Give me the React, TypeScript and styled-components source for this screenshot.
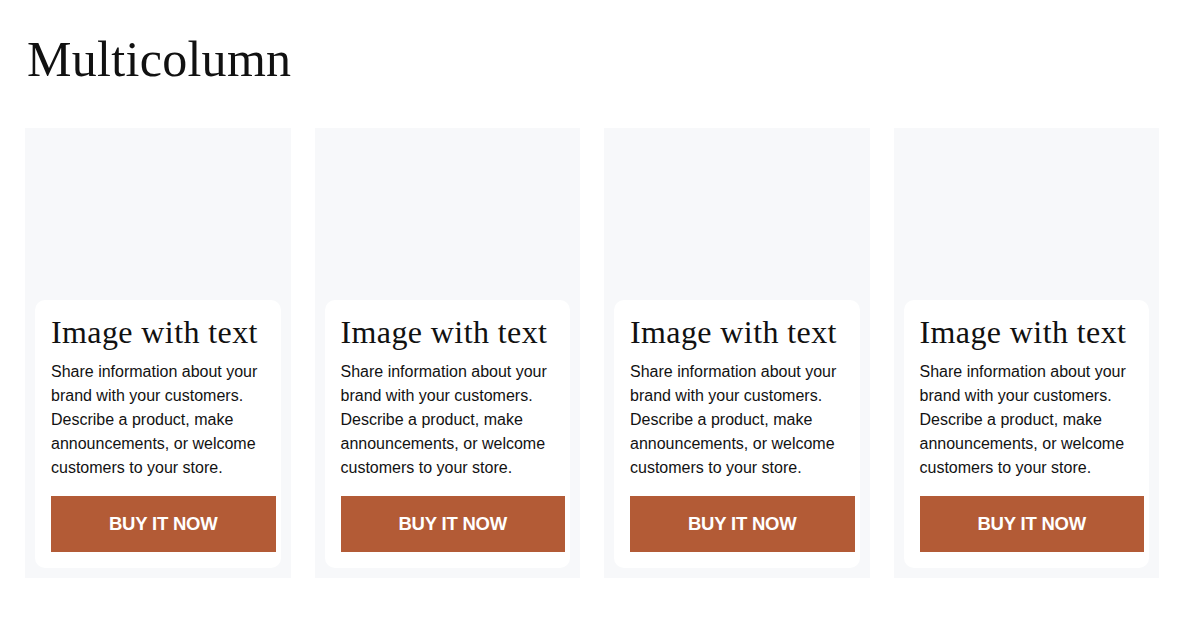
import styled, { createGlobalStyle } from 'styled-components'

const GlobalStyle = createGlobalStyle`
  body {
    margin: 0;
    background: #ffffff;
    font-family: "Liberation Sans", Arial, sans-serif;
  }
`

const Section = styled.section`
  padding: 27px 27px 0 25px;
`

const Title = styled.h2`
  margin: 0 0 37px 2px;
  font-family: "Liberation Serif", "Times New Roman", serif;
  font-weight: 400;
  font-size: 50px;
  letter-spacing: 0.3px;
  line-height: 64px;
  color: #111111;
`

const Grid = styled.div`
  display: grid;
  grid-template-columns: repeat(4, 1fr);
  column-gap: 24px;
`

const Column = styled.div`
  background: #f7f8fa;
  padding: 10px;
  display: flex;
  flex-direction: column;
`

const ImageSpace = styled.div`
  height: 162px;
`

const Card = styled.div`
  background: #ffffff;
  border-radius: 10px;
  padding: 14px 5px 16px 16px;
`

const CardTitle = styled.h3`
  margin: 0 0 10px;
  font-family: "Liberation Serif", "Times New Roman", serif;
  font-weight: 400;
  font-size: 32px;
  letter-spacing: 0.4px;
  line-height: 36px;
  color: #111111;
`

const Text = styled.p`
  margin: 0 0 16px;
  font-size: 16px;
  line-height: 24px;
  color: #121212;
  max-width: 214px;
`

const Button = styled.a`
  display: flex;
  align-items: center;
  justify-content: center;
  height: 56px;
  background: #b35b36;
  color: #ffffff;
  font-weight: 700;
  font-size: 18.5px;
  letter-spacing: -0.2px;
  text-decoration: none;
  text-transform: uppercase;
`

const items = [1, 2, 3, 4]

export default function App() {
  return (
    <>
      <GlobalStyle />
      <Section>
        <Title>Multicolumn</Title>
        <Grid>
          {items.map((i) => (
            <Column key={i}>
              <ImageSpace />
              <Card>
                <CardTitle>Image with text</CardTitle>
                <Text>
                  Share information about your brand with your customers. Describe a product, make
                  announcements, or welcome customers to your store.
                </Text>
                <Button href="#">Buy it now</Button>
              </Card>
            </Column>
          ))}
        </Grid>
      </Section>
    </>
  )
}
